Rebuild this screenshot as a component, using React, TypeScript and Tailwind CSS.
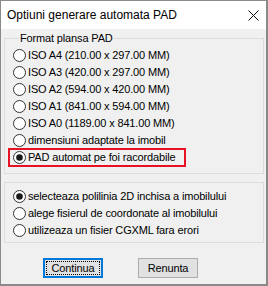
import React from 'react';

const formats = [
  'ISO A4 (210.00 x 297.00 MM)',
  'ISO A3 (420.00 x 297.00 MM)',
  'ISO A2 (594.00 x 420.00 MM)',
  'ISO A1 (841.00 x 594.00 MM)',
  'ISO A0 (1189.00 x 841.00 MM)',
  'dimensiuni adaptate la imobil',
];

const sources = [
  { label: 'selecteaza polilinia 2D inchisa a imobilului', checked: true },
  { label: 'alege fisierul de coordonate al imobilului', checked: false },
  { label: 'utilizeaza un fisier CGXML fara erori', checked: false },
];

const Radio = ({ checked }: { checked?: boolean }) => (
  <svg width="13" height="13" viewBox="0 0 13 13" className="shrink-0">
    <circle cx="6.5" cy="6.5" r="6" fill="#fff" stroke="#333" strokeWidth="1" />
    {checked && <circle cx="6.5" cy="6.5" r="3.3" fill="#1a1a1a" />}
  </svg>
);

const Option = ({ label, checked }: { label: string; checked?: boolean }) => (
  <div className="flex items-center h-[17px] gap-[2px]">
    <Radio checked={checked} />
    <span className="whitespace-nowrap">{label}</span>
  </div>
);

const App = () => {
  return (
    <div
      className="w-[268px] h-[286px] bg-[#f0f0f0] border-l border-t border-r-2 border-b-2 border-[#8a8a8a] flex flex-col text-black text-[11px] tracking-[-0.15px]"
      style={{ fontFamily: '"Liberation Sans", Arial, sans-serif' }}>
      <div className="h-[28px] bg-white flex items-center justify-between pl-[6px] pr-[7px] shrink-0">
        <span className="text-[12px] tracking-normal">Optiuni generare automata PAD</span>
        <svg width="11" height="11" viewBox="0 0 11 11">
          <path d="M0.5 0.5L10.5 10.5M10.5 0.5L0.5 10.5" stroke="#111" strokeWidth="1" />
        </svg>
      </div>

      <fieldset className="ml-[3px] mt-[3px] w-[260px] border border-[#dcdcdc] pl-[8px] pt-[2px] pb-[7px]">
        <legend className="ml-[6px] px-[1px] leading-[13px]">Format plansa PAD</legend>
        {formats.map((f) => (
          <Option key={f} label={f} />
        ))}
        <div className="-ml-[4px] pl-[4px] w-[176px] outline-2 outline-[#e81123] -outline-offset-1">
          <Option label="PAD automat pe foi racordabile" checked />
        </div>
      </fieldset>

      <fieldset className="ml-[3px] mt-[8px] w-[260px] border border-[#dcdcdc] pl-[8px] pt-[5px] pb-[3px]">
        {sources.map((s) => (
          <Option key={s.label} label={s.label} checked={s.checked} />
        ))}
      </fieldset>

      <div className="flex mt-[15px] pl-[42px] gap-[35px]">
        <button className="relative w-[60px] h-[20px] bg-[#e1e1e1] border-2 border-[#0078d7] flex items-center justify-center">
          <span className="absolute inset-[1px] border border-dotted border-black" />
          Continua
        </button>
        <button className="w-[60px] h-[20px] bg-[#e1e1e1] border border-[#adadad] flex items-center justify-center">
          Renunta
        </button>
      </div>
    </div>
  );
};

export default App;
